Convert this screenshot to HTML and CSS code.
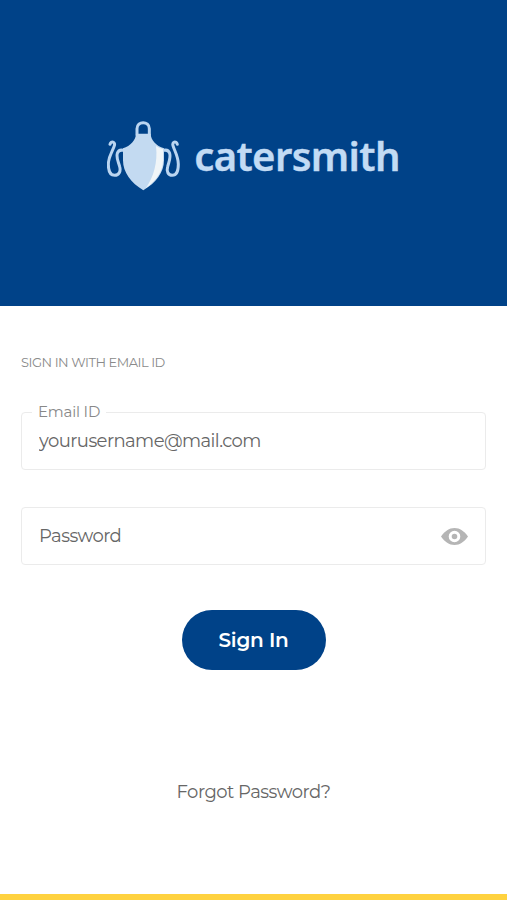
FILE: index.html
```html
<!DOCTYPE html>
<html lang="en">
<head>
    <meta charset="UTF-8">
    <meta name="viewport" content="width=device-width, initial-scale=1.0">
    <title>Catersmith - Sign In</title>
    <link rel="stylesheet" href="styles.css">
</head>
<body>
    <header class="banner">
        <svg class="logo" viewBox="24 33 222 210" aria-hidden="true">
            <path class="strap" d="M114 74V56C114 32 151 32 151 56V74"/>
            <path class="strap" d="M33 103C36 91 50 96 46 107C42 122 28 139 28 163C28 184 34 196 47 196C60 196 66 184 62 170C58 154 51 143 55 130C58 121 64 119 73 121"/>
            <path class="strap" d="M235 103C232 91 218 96 222 107C226 122 238 139 238 163C238 184 232 196 220 196C207 196 202 184 206 170C210 154 216 143 212 130C209 121 203 119 194 121"/>
            <path class="apron" d="M111 71H155C156 91 171 107 195 115V151C195 187 171 219 133 241C96 219 72 187 72 151V115C95 107 110 91 111 71Z"/>
            <path class="shine" d="M171 108Q182 115 192 117V151C192 182 174 211 141 234C163 202 177 158 171 108Z"/>
        </svg>
        <span class="brand">catersmith</span>
    </header>
    <main class="content">
        <h1>SIGN IN WITH EMAIL ID</h1>
        <form>
            <div class="field">
                <label for="email">Email ID</label>
                <input type="text" id="email" name="email" value="yourusername@mail.com">
            </div>
            <div class="field">
                <input type="password" name="password" placeholder="Password" aria-label="Password">
                <svg class="eye" viewBox="0 0 27 17" aria-hidden="true">
                    <path d="M0 8.500C4 3 8 0 13.500 0S23 3 27 8.500C23 14 19 17 13.500 17S4 14 0 8.500Z"/>
                    <circle class="ring" cx="13.500" cy="8.500" r="4.300"/>
                </svg>
            </div>
            <button type="submit">Sign In</button>
        </form>
        <a class="forgot" href="#">Forgot Password?</a>
    </main>
</body>
</html>
```
FILE: styles.css
```css
* { box-sizing: border-box; }
body { margin: 0; height: 900px; display: flex; flex-direction: column; overflow: hidden; background: #fff; border-bottom: 6px solid #ffd23f; font-family: Montserrat, Inter, "Open Sans", sans-serif; color: #555; }
.banner { height: 306px; flex: none; display: flex; align-items: center; justify-content: center; gap: 13px; padding-top: 6px; background: #004288; }
.logo { width: 74px; height: 70px; }
.strap { fill: none; stroke: #bad5f1; stroke-width: 9; stroke-linecap: round; }
.apron { fill: #c3daf1; }
.shine { fill: #f0f5f8; }
.brand { font-family: "Noto Sans", "Open Sans", sans-serif; font-size: 40px; font-weight: 600; line-height: 56px; color: #c2dbf4; letter-spacing: -0.6px; -webkit-text-stroke: 0.4px #c2dbf4; }
.content { display: flex; flex-direction: column; padding: 47px 21px 0; }
h1 { margin: 0 0 41px; font-size: 13px; font-weight: 400; line-height: 18px; color: #8a8a8a; letter-spacing: -0.46px; }
form { display: flex; flex-direction: column; }
.field { position: relative; display: flex; align-items: center; height: 58px; margin-bottom: 37px; border: 1px solid #ebebeb; border-radius: 4px; }
.field label { position: absolute; top: -10px; left: 10px; padding: 0 6px; background: #fff; font-size: 15px; font-weight: 400; line-height: 18px; color: #888; letter-spacing: -0.2px; }
.field input { flex: 1; min-width: 0; height: 100%; padding: 0 17px 1px; border: 0; outline: 0; background: none; font-family: inherit; font-size: 18px; font-weight: 400; letter-spacing: -0.56px; color: #666; }
.field input::placeholder { color: #666; opacity: 1; }
.eye { width: 27px; height: 17px; margin-right: 17px; fill: #b5b5b5; }
.ring { fill: #b5b5b5; stroke: #fff; stroke-width: 3; }
button { align-self: center; width: 144px; height: 60px; margin-top: 8px; padding: 0; border: 0; border-radius: 30px; background: #004288; color: #fff; font-family: inherit; font-size: 20px; font-weight: 600; letter-spacing: -0.2px; }
.forgot { align-self: center; margin-top: 110px; font-size: 18px; font-weight: 400; line-height: 24px; letter-spacing: -0.5px; color: #666; text-decoration: none; }
```
